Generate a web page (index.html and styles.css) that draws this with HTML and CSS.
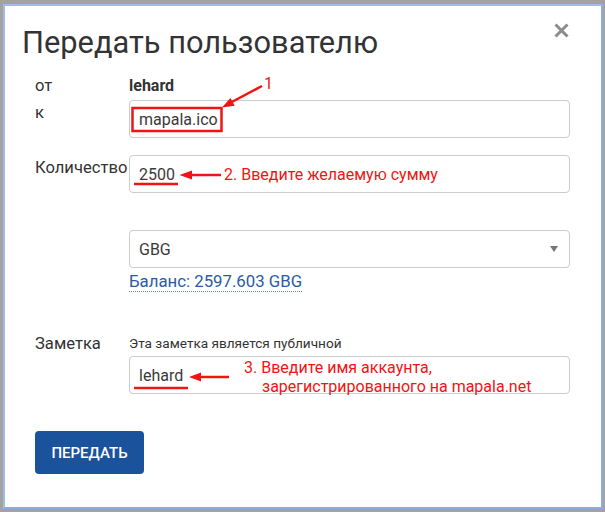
FILE: index.html
```html
<!DOCTYPE html>
<html lang="ru">
<head>
<meta charset="utf-8">
<title>Передать пользователю</title>
<link rel="stylesheet" href="styles.css">
</head>
<body>
<div class="modal">
  <div class="header">
    <h1 class="title">Передать пользователю</h1>
    <svg class="close" width="15" height="15" viewBox="0 0 15 15"><path d="M1.5 1.5L13.5 13.5M13.5 1.5L1.5 13.5" stroke="#8c8c8c" stroke-width="3"/></svg>
  </div>
  <div class="form">
    <div class="row row-from"><div class="label">от</div><div class="value">lehard</div></div>
    <div class="row row-to"><div class="label">к</div><div class="field"><div class="input">mapala.ico</div></div></div>
    <div class="row row-amount"><div class="label">Количество</div><div class="field"><div class="input">2500</div></div></div>
    <div class="row row-asset"><div class="label"></div><div class="field"><div class="input select"><span>GBG</span><span class="caret"></span></div><div class="balance"><span class="balance-link">Баланс: 2597.603 GBG</span></div></div></div>
    <div class="row row-memo"><div class="label">Заметка</div><div class="field"><div class="hint">Эта заметка является публичной</div><div class="input">lehard</div></div></div>
    <button class="submit">ПЕРЕДАТЬ</button>
  </div>
  <svg class="notes" width="605" height="512" viewBox="0 0 605 512">
    <g fill="none" stroke="#f01414" stroke-width="2.5">
      <rect x="132.5" y="108" width="89" height="23"/>
      <line x1="262" y1="86" x2="229" y2="103.5"/>
      <line x1="221" y1="175" x2="189" y2="175"/>
      <line x1="134" y1="184" x2="178" y2="184"/>
      <line x1="229" y1="377" x2="199" y2="377"/>
      <line x1="134" y1="388" x2="188" y2="388"/>
    </g>
    <g fill="#f01414">
      <polygon points="222,107.5 234.7,105.8 230.4,97.9"/>
      <polygon points="179.5,175 192,170.5 192,179.5"/>
      <polygon points="189,377 201,372.5 201,381.5"/>
    </g>
  </svg>
  <div class="note-layer">
    <div class="note note-1">1</div>
    <div class="note note-2">2. Введите желаемую сумму</div>
    <div class="note note-3">3. Введите имя аккаунта,<br><span class="note-indent">зарегистрированного на mapala.net</span></div>
  </div>
</div>
</body>
</html>
```

FILE: styles.css
```css
html, body {
  margin: 0;
  padding: 0;
}
body {
  background: #a2a2a2;
  width: 605px;
  height: 512px;
  overflow: hidden;
  font-family: Roboto, "Liberation Sans", sans-serif;
  color: #333;
}
.modal {
  position: relative;
  box-sizing: border-box;
  width: 600px;
  height: 505px;
  margin: 4px 0 0 3px;
  background: #fff;
  border: 2px solid #8aabe3;
  border-top-color: #9fbbe9;
  border-left-color: #9fbbe9;
}
.header {
  display: flex;
  justify-content: space-between;
  align-items: flex-start;
  padding: 17px 32px 0 17px;
}
.title {
  margin: 4px 0 0 0;
  font-size: 30.8px;
  line-height: 32px;
  font-weight: 400;
  color: #333;
}
.close {
  display: block;
}
.form {
  padding-left: 30px;
  margin-top: 17px;
}
.row {
  display: flex;
  align-items: flex-start;
}
.label {
  width: 94px;
  flex: none;
  font-size: 16.6px;
  line-height: 20px;
  padding-top: 3px;
}
.row-from .label {
  padding-top: 0;
}
.value {
  font-size: 16px;
  line-height: 20px;
  font-weight: 700;
  color: #333;
}
.field {
  width: 441px;
}
.row-to { margin-top: 4px; }
.row-amount { margin-top: 17px; }
.row-asset { margin-top: 37px; }
.row-memo { margin-top: 40px; }
.input {
  box-sizing: border-box;
  height: 38px;
  border: 1px solid #ccc;
  border-radius: 4px;
  padding: 0 9px;
  display: flex;
  align-items: center;
  font-size: 16px;
  color: #3a3a3a;
}
.select {
  justify-content: space-between;
  padding-right: 11px;
}
.caret {
  width: 0;
  height: 0;
  border-left: 4px solid transparent;
  border-right: 4px solid transparent;
  border-top: 6px solid #777;
}
.balance {
  margin-top: 3px;
  font-size: 16.8px;
  line-height: 20px;
}
.balance-link {
  color: #2b5ba3;
  border-bottom: 1px dotted #6a7f9e;
}
.hint {
  font-size: 13.6px;
  line-height: 16px;
  padding-top: 4px;
  margin-bottom: 5px;
  color: #333;
}
.submit {
  display: block;
  margin-top: 37px;
  width: 109px;
  height: 43px;
  border: none;
  border-radius: 4px;
  background: #1b529c;
  color: #fff;
  font-family: Roboto, "Liberation Sans", sans-serif;
  font-size: 15px;
  font-weight: 500;
  padding: 0;
}
.notes {
  position: absolute;
  top: -6px;
  left: -5px;
  pointer-events: none;
}
.note-layer {
  position: absolute;
  top: -6px;
  left: -5px;
  width: 605px;
  height: 512px;
  pointer-events: none;
}
.note {
  position: absolute;
  font-family: Roboto, "Liberation Sans", sans-serif;
  font-size: 16px;
  line-height: 16px;
  color: #f01414;
  white-space: nowrap;
}
.note-1 { left: 264px; top: 75.5px; }
.note-2 { left: 224px; top: 166.5px; }
.note-3 { left: 244px; top: 358px; line-height: 19px; }
.note-indent { padding-left: 18px; }
```
